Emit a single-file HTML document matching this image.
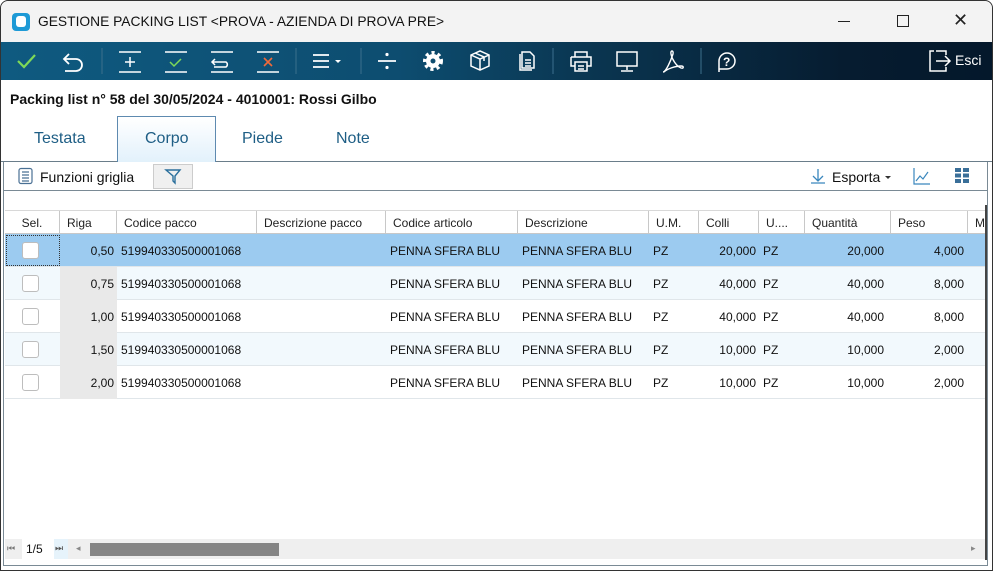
<!DOCTYPE html>
<html><head><meta charset="utf-8"><style>
*{margin:0;padding:0;box-sizing:border-box}
body{width:993px;height:571px;background:#fff;font-family:"Liberation Sans","DejaVu Sans",sans-serif;position:relative;overflow:hidden}
.a{position:absolute}
.tb svg{position:absolute;top:0}
.hd{position:absolute;top:210px;height:24px;font-size:12px;color:#222;line-height:24px;background:#fff;border-bottom:1px solid #c8c8c8;border-top:1px solid #d8d8d8}
.hc{position:absolute;top:0;height:23px;border-right:1px solid #c8c8c8;padding-left:7px;white-space:nowrap;overflow:hidden}
.row{position:absolute;left:5px;width:980px;height:33px;font-size:12px;color:#111;line-height:34px;border-bottom:1px solid #e0e6ea}
.c{position:absolute;top:0;height:32px;white-space:nowrap}
.r{text-align:right}
.g{position:absolute;left:55px;top:0;width:57px;height:33px;background:#e9e9e9}
.cb{position:absolute;left:17px;top:8px;width:17px;height:17px;border:1px solid #bdbdbd;border-radius:3px;background:#fff}
</style></head><body>
<div class="a" style="left:0;top:0;width:993px;height:571px;border:1px solid #333;border-radius:8px 8px 0 0"></div>
<div class="a" style="left:1px;top:1px;width:991px;height:41px;background:#f3f3f3;border-radius:8px 8px 0 0"></div>
<div class="a" style="left:12px;top:13px;width:18px;height:18px;background:#1e9ad6;border-radius:4px"></div>
<div class="a" style="left:16px;top:16px;width:10px;height:11px;background:#fff;border-radius:3px"></div>
<div class="a" style="left:38px;top:14px;font-size:13.8px;color:#111">GESTIONE PACKING LIST &lt;PROVA - AZIENDA DI PROVA PRE&gt;</div>
<div class="a" style="left:838px;top:21px;width:12px;height:1px;background:#222"></div>
<div class="a" style="left:897px;top:15px;width:12px;height:12px;border:1px solid #222"></div>
<div class="a" style="left:953px;top:10px;font-size:18px;color:#222">✕</div>
<div class="a tb" style="left:1px;top:42px;width:991px;height:38px;background:linear-gradient(90deg,#0f5a80 0%,#0d4d70 40%,#0a3550 60%,#061c30 85%,#04182b 100%)">
<svg width="991" height="38" fill="none" stroke="#fff" stroke-width="1.8">
<path d="M17 19l6 6 11-12" stroke="#7ed957" stroke-width="2.2"/>
<path d="M68 12l-5 5 5 5M63 17h12a6 6 0 010 12h-11"/>
<line x1="101" y1="6" x2="101" y2="32" stroke="#3b6f8c" stroke-width="1"/>
<path d="M118 10h22M118 30h22M129 15v10M124 20h10" stroke-width="1.5"/>
<path d="M164 10h22M164 30h22" stroke-width="1.5"/><path d="M169 20l4 4 7-7" stroke="#7ed957" stroke-width="1.5"/>
<path d="M210 10h22M210 30h22M214 17l-3 3 3 3M211 20h14a3 3 0 010 5h-12" stroke-width="1.5"/>
<path d="M256 10h22M256 30h22" stroke-width="1.5"/><path d="M263 16l8 8M271 16l-8 8" stroke="#f06a3a" stroke-width="1.6"/>
<line x1="295" y1="6" x2="295" y2="32" stroke="#3b6f8c" stroke-width="1"/>
<path d="M312 13h16M312 19h16M312 25h16"/><path d="M334 18h6l-3 3z" fill="#fff" stroke="none"/>
<line x1="360" y1="6" x2="360" y2="32" stroke="#3b6f8c" stroke-width="1"/>
<path d="M377 19h18"/><circle cx="386" cy="12.5" r="1.6" fill="#fff" stroke="none"/><circle cx="386" cy="25.5" r="1.6" fill="#fff" stroke="none"/>
<circle cx="432" cy="19" r="8" stroke-width="4" stroke-dasharray="3 3"/><circle cx="432" cy="19" r="7" fill="#fff" stroke="none"/><circle cx="432" cy="19" r="2.5" fill="#0d4d70" stroke="none"/>
<path d="M470 13l9-4 9 4v11l-9 4-9-4zM470 13l9 4 9-4M479 17v11M474 11l9 4v4" stroke-width="1.5"/>
<path d="M519 12v16h12M521 10h8l4 4v12h-12z M524 18h6M524 21h6M524 24h6" stroke-width="1.5"/>
<line x1="552" y1="6" x2="552" y2="32" stroke="#3b6f8c" stroke-width="1"/>
<path d="M574 15v-5h12v5M570 15h20v9h-4M574 24h-4v-9M574 20h12v9h-12zM577 24h6M577 27h6" stroke-width="1.5"/>
<path d="M616 10h20v14h-20zM626 24v4M620 29h12" stroke-width="1.5"/>
<path d="M662 30c3 0 8-12 10-18c1-4-3-4-2 0c1 5 5 12 10 14c3 1 3-2 0-2c-6 0-14 3-17 6" stroke-width="1.4"/>
<line x1="700" y1="6" x2="700" y2="32" stroke="#3b6f8c" stroke-width="1"/>
<path d="M718 30v-11a8 8 0 118 8h-8z" stroke-width="1.5"/><text x="722" y="24" fill="#fff" stroke="none" font-size="12" font-family="Liberation Sans" font-weight="bold">?</text>
<path d="M935 9h10v4M945 25v4h-16v-20h4M935 19h14M944 14l5 5-5 5" stroke-width="1.5"/>
</svg>
<div class="a" style="left:954px;top:10px;color:#fff;font-size:14px">Esci</div>
</div>
<div class="a" style="left:10px;top:91px;font-size:14px;font-weight:bold;color:#111">Packing list n° 58 del 30/05/2024 - 4010001: Rossi Gilbo</div>
<div class="a" style="left:1px;top:161px;width:991px;height:1px;background:#6a7d8a"></div>
<div class="a" style="left:117px;top:116px;width:99px;height:46px;border:1px solid #5e8ab0;border-bottom:none;background:linear-gradient(#fff,#e2f1fb)"></div>
<div class="a" style="left:34px;top:130px;font-size:16px;color:#1e5e85">Testata</div>
<div class="a" style="left:145px;top:130px;font-size:16px;color:#1e5e85">Corpo</div>
<div class="a" style="left:242px;top:130px;font-size:16px;color:#1e5e85">Piede</div>
<div class="a" style="left:336px;top:130px;font-size:16px;color:#1e5e85">Note</div>
<div class="a" style="left:3px;top:162px;width:985px;height:29px;border:1px solid #7a8a95;border-top:none"></div>
<svg class="a" style="left:17px;top:167px" width="18" height="18" fill="none" stroke="#4a7094" stroke-width="1.2"><rect x="2" y="1.5" width="13" height="15" rx="2"/><path d="M5 5h7M5 8h7M5 11h7M5 14h7"/></svg>
<div class="a" style="left:40px;top:169px;font-size:14px;color:#111">Funzioni griglia</div>
<div class="a" style="left:153px;top:164px;width:40px;height:25px;border:1px solid #ccc;background:#f0f0f0"></div>
<svg class="a" style="left:164px;top:167px" width="18" height="18" fill="none" stroke="#2a6f9c" stroke-width="1.4"><path d="M2 3h14l-5 6v7l-2-2V9z"/></svg>
<svg class="a" style="left:809px;top:167px" width="18" height="18" fill="none" stroke="#3a87bd" stroke-width="1.3"><path d="M9 2v12M4 9l5 5 5-5M2 16h14"/></svg>
<div class="a" style="left:832px;top:169px;font-size:14px;color:#111">Esporta</div>
<div class="a" style="left:885px;top:176px;border:3px solid transparent;border-top:3px solid #333"></div>
<svg class="a" style="left:912px;top:166px" width="20" height="20" fill="none" stroke="#3a87bd" stroke-width="1.2"><path d="M2 2v16h16M4 15l4-5 3 3 5-7"/></svg>
<svg class="a" style="left:954px;top:167px" width="16" height="16" fill="#3a6f99"><rect x="1" y="1" width="6" height="4"/><rect x="9" y="1" width="6" height="4"/><rect x="1" y="6.5" width="6" height="4"/><rect x="9" y="6.5" width="6" height="4"/><rect x="1" y="12" width="6" height="4"/><rect x="9" y="12" width="6" height="4"/></svg>
<div class="a" style="left:3px;top:191px;width:985px;height:375px;border:1px solid #7a8a95;border-top:none"></div>
<div class="a" style="left:985px;top:205px;width:2px;height:355px;background:#444"></div>
<div class="hd" style="left:5px;width:980px">
<div class="hc" style="left:0;width:55px;text-align:center;padding:0">Sel.</div>
<div class="hc" style="left:55px;width:57px">Riga</div>
<div class="hc" style="left:112px;width:140px">Codice pacco</div>
<div class="hc" style="left:252px;width:129px">Descrizione pacco</div>
<div class="hc" style="left:381px;width:132px">Codice articolo</div>
<div class="hc" style="left:513px;width:131px">Descrizione</div>
<div class="hc" style="left:644px;width:50px">U.M.</div>
<div class="hc" style="left:694px;width:60px">Colli</div>
<div class="hc" style="left:754px;width:46px">U....</div>
<div class="hc" style="left:800px;width:86px">Quantità</div>
<div class="hc" style="left:886px;width:77px">Peso</div>
<div class="hc" style="left:963px;width:17px;border:none">M</div>
</div>

<div class="row" style="top:234px;background:#9ccbf0"><div class="a" style="left:1px;top:1px;width:54px;height:31px;border:1px dotted #333"></div><div class="cb"></div><div class="c r" style="left:55px;width:54px">0,50</div><div class="c" style="left:116px">519940330500001068</div><div class="c" style="left:385px">PENNA SFERA BLU</div><div class="c" style="left:517px">PENNA SFERA BLU</div><div class="c" style="left:648px">PZ</div><div class="c r" style="left:694px;width:57px">20,000</div><div class="c" style="left:758px">PZ</div><div class="c r" style="left:800px;width:79px">20,000</div><div class="c r" style="left:886px;width:73px">4,000</div></div>
<div class="row" style="top:267px;background:#f2f9fd"><div class="g"></div><div class="cb"></div><div class="c r" style="left:55px;width:54px">0,75</div><div class="c" style="left:116px">519940330500001068</div><div class="c" style="left:385px">PENNA SFERA BLU</div><div class="c" style="left:517px">PENNA SFERA BLU</div><div class="c" style="left:648px">PZ</div><div class="c r" style="left:694px;width:57px">40,000</div><div class="c" style="left:758px">PZ</div><div class="c r" style="left:800px;width:79px">40,000</div><div class="c r" style="left:886px;width:73px">8,000</div></div>
<div class="row" style="top:300px"><div class="g"></div><div class="cb"></div><div class="c r" style="left:55px;width:54px">1,00</div><div class="c" style="left:116px">519940330500001068</div><div class="c" style="left:385px">PENNA SFERA BLU</div><div class="c" style="left:517px">PENNA SFERA BLU</div><div class="c" style="left:648px">PZ</div><div class="c r" style="left:694px;width:57px">40,000</div><div class="c" style="left:758px">PZ</div><div class="c r" style="left:800px;width:79px">40,000</div><div class="c r" style="left:886px;width:73px">8,000</div></div>
<div class="row" style="top:333px;background:#f2f9fd"><div class="g"></div><div class="cb"></div><div class="c r" style="left:55px;width:54px">1,50</div><div class="c" style="left:116px">519940330500001068</div><div class="c" style="left:385px">PENNA SFERA BLU</div><div class="c" style="left:517px">PENNA SFERA BLU</div><div class="c" style="left:648px">PZ</div><div class="c r" style="left:694px;width:57px">10,000</div><div class="c" style="left:758px">PZ</div><div class="c r" style="left:800px;width:79px">10,000</div><div class="c r" style="left:886px;width:73px">2,000</div></div>
<div class="row" style="top:366px"><div class="g"></div><div class="cb"></div><div class="c r" style="left:55px;width:54px">2,00</div><div class="c" style="left:116px">519940330500001068</div><div class="c" style="left:385px">PENNA SFERA BLU</div><div class="c" style="left:517px">PENNA SFERA BLU</div><div class="c" style="left:648px">PZ</div><div class="c r" style="left:694px;width:57px">10,000</div><div class="c" style="left:758px">PZ</div><div class="c r" style="left:800px;width:79px">10,000</div><div class="c r" style="left:886px;width:73px">2,000</div></div>

<div class="a" style="left:5px;top:539px;width:980px;height:20px;background:#efefef"></div>
<div class="a" style="left:22px;top:539px;width:32px;height:20px;background:#fff"></div>
<div class="a" style="left:7px;top:543px;font-size:9px;color:#777">⏮</div>
<div class="a" style="left:26px;top:542px;font-size:12px;color:#111">1/5</div>
<div class="a" style="left:54px;top:539px;width:14px;height:20px;background:#e6f3fb"></div>
<div class="a" style="left:55px;top:543px;font-size:9px;color:#555">⏭</div>
<div class="a" style="left:76px;top:543px;font-size:9px;color:#888">◂</div>
<div class="a" style="left:90px;top:543px;width:189px;height:13px;background:#858585"></div>
<div class="a" style="left:971px;top:543px;font-size:9px;color:#888">▸</div>
</body></html>
